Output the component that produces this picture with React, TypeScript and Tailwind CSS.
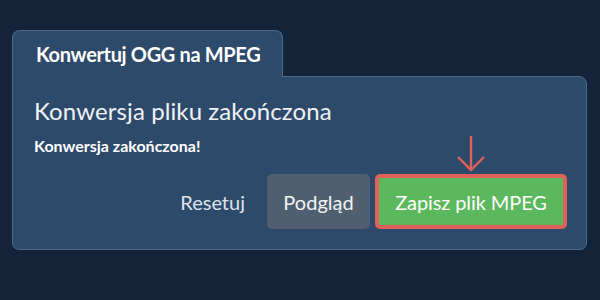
export default function App() {
  return (
    <div
      className="w-[600px] h-[300px] bg-[#12233a] pt-[30px] px-[12px] text-white"
      style={{ fontFamily: "Lato, 'Noto Sans', sans-serif" }}
    >
      <div className="w-[575px]">
        <div className="relative z-10 -mb-px w-[271px] h-[47px] bg-[#2e4a6a] border border-b-0 border-[#4b6a8a] rounded-t-[8px] pl-[23px] flex items-center">
          <span className="text-[20px] font-bold tracking-[-0.35px]">Konwertuj OGG na MPEG</span>
        </div>
        <div className="h-[174px] bg-[#2e4a6a] border border-[#4b6a8a] rounded-tr-[8px] rounded-b-[7px] pl-[21px] pr-[19px] pt-[19px]">
          <h1 className="text-[24px] leading-[30px] tracking-[0.1px] text-[#eef2f7]">Konwersja pliku zakończona</h1>
          <p className="mt-[10px] text-[16px] font-bold leading-[20px]">Konwersja zakończona!</p>
          <div className="mt-[18px] flex items-center justify-end">
            <button className="mr-[22px] text-[20px] text-[#dde3ea]">Resetuj</button>
            <button className="w-[103px] h-[55px] rounded-[5px] bg-[#4f5f6f] text-[20px] text-[#f2f4f6]">Podgląd</button>
            <div className="relative ml-[5px]">
              <svg
                className="absolute left-1/2 -translate-x-1/2 -top-[38px]"
                width="30"
                height="36"
                viewBox="0 0 30 36"
                fill="none"
                stroke="#e0605a"
                strokeWidth="2.4"
              >
                <path d="M15 0 V34" />
                <path d="M2 21 L15 34 L28 21" />
              </svg>
              <button className="w-[192px] h-[55px] rounded-[5px] border-[4px] border-[#e0605a] bg-[#5cb85c] text-[20px] tracking-[-0.1px] text-white">
                Zapisz plik MPEG
              </button>
            </div>
          </div>
        </div>
      </div>
    </div>
  );
}
